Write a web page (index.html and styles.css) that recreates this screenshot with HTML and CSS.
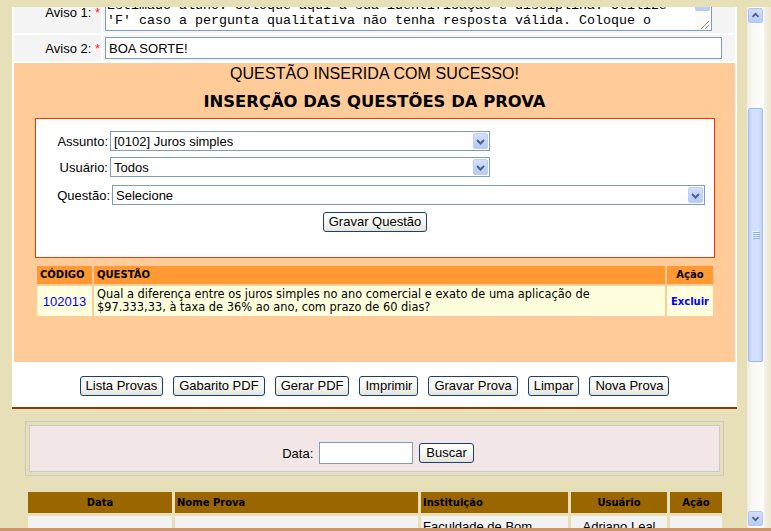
FILE: index.html
```html
<!DOCTYPE html>
<html lang="pt">
<head>
<meta charset="utf-8">
<title>Inserção das questões da prova</title>
<link rel="stylesheet" href="styles.css">
</head>
<body>
<div class="window">
  <div class="topstrip"></div>
  <div class="frame">
    <div class="viewport">
      <div class="page">
        <div class="panel">
          <div class="fields">
            <div class="flabel">Aviso 1:&nbsp;<span class="req">*</span></div>
            <div class="fcell">
              <div class="textarea">
                <div class="ta-text"><div>Estimado aluno: coloque aqui a sua identificação e disciplina. Utilize</div><div>'F' caso a pergunta qualitativa não tenha resposta válida. Coloque o</div></div>
                <div class="ta-bar">
                  <div class="ta-btn"><svg width="15" height="15" viewBox="0 0 15 15"><path d="M4 6l3.5 3.5L11 6" fill="none" stroke="#4d6185" stroke-width="2"/></svg></div>
                  <div class="ta-grip"><svg width="16" height="18" viewBox="0 0 16 18"><path d="M14 9L6 17M14 13L10 17" stroke="#8a8a8a" stroke-width="1"/></svg></div>
                </div>
              </div>
            </div>
            <div class="flabel">Aviso 2:&nbsp;<span class="req">*</span></div>
            <div class="fcell"><input class="text wide" type="text" value="BOA SORTE!"></div>
          </div>

          <div class="orange">
            <div class="msg">QUESTÃO INSERIDA COM SUCESSO!</div>
            <h2 class="title">INSERÇÃO DAS QUESTÕES DA PROVA</h2>
            <div class="qbox">
              <div class="qrow">
                <span class="qlabel">Assunto:</span>
                <div class="select s-short"><span class="sel-text">[0102] Juros simples</span><span class="sel-arrow"><svg width="13" height="13" viewBox="0 0 13 13"><path d="M3 5l3.5 3.5L10 5" fill="none" stroke="#4d6185" stroke-width="2"/></svg></span></div>
              </div>
              <div class="qrow r-gap6">
                <span class="qlabel">Usuário:</span>
                <div class="select s-short"><span class="sel-text">Todos</span><span class="sel-arrow"><svg width="13" height="13" viewBox="0 0 13 13"><path d="M3 5l3.5 3.5L10 5" fill="none" stroke="#4d6185" stroke-width="2"/></svg></span></div>
              </div>
              <div class="qrow r-gap8">
                <span class="qlabel ql-wide">Questão:</span>
                <div class="select s-long"><span class="sel-text">Selecione</span><span class="sel-arrow"><svg width="13" height="13" viewBox="0 0 13 13"><path d="M3 5l3.5 3.5L10 5" fill="none" stroke="#4d6185" stroke-width="2"/></svg></span></div>
              </div>
              <div class="qbtn"><button class="xpbtn" type="button">Gravar Questão</button></div>
            </div>

            <table class="qtable">
              <colgroup><col class="qc1"><col class="qc2"><col class="qc3"></colgroup>
              <tr><th>CÓDIGO</th><th>QUESTÃO</th><th class="center">Ação</th></tr>
              <tr>
                <td class="code">102013</td>
                <td class="qtext">Qual a diferença entre os juros simples no ano comercial e exato de uma aplicação de<br>$97.333,33, à taxa de 36% ao ano, com prazo de 60 dias?</td>
                <td class="act">Excluir</td>
              </tr>
            </table>
          </div>

          <div class="actions">
            <button class="xpbtn" type="button">Lista Provas</button>
            <button class="xpbtn" type="button">Gabarito PDF</button>
            <button class="xpbtn" type="button">Gerar PDF</button>
            <button class="xpbtn" type="button">Imprimir</button>
            <button class="xpbtn" type="button">Gravar Prova</button>
            <button class="xpbtn" type="button">Limpar</button>
            <button class="xpbtn" type="button">Nova Prova</button>
          </div>
        </div>

        <div class="lower">
          <div class="search">
            <div class="search-in">
              <span>Data:</span>
              <input class="text date" type="text">
              <button class="xpbtn buscar" type="button">Buscar</button>
            </div>
          </div>
          <table class="list">
            <colgroup><col class="lc1"><col class="lc2"><col class="lc3"><col class="lc4"><col class="lc5"></colgroup>
            <tr><th class="center">Data</th><th>Nome Prova</th><th>Instituição</th><th class="center">Usuário</th><th class="center">Ação</th></tr>
            <tr><td class="center mid">17/05/2010</td><td class="mid">Prova de Matemática Financeira</td><td>Faculdade de Bom Jesus da Lapa - FBJL</td><td class="center">Adriano Leal</td><td class="center mid"></td></tr>
          </table>
        </div>
      </div>
    </div>

    <div class="vscroll">
      <div class="sb-btn"><svg width="15" height="15" viewBox="0 0 15 15"><path d="M4 9l3.5-3.5L11 9" fill="none" stroke="#4d6185" stroke-width="2"/></svg></div>
      <div class="sb-thumb"><svg width="8" height="8" viewBox="0 0 8 8"><path d="M0 0.5h7M0 2.5h7M0 4.5h7M0 6.5h7" stroke="#eef4ff" stroke-width="1"/><path d="M1 1.5h7M1 3.5h7M1 5.5h7M1 7.5h7" stroke="#8fb0f0" stroke-width="1"/></svg></div>
      <div class="sb-fill"></div>
      <div class="sb-btn sb-down"><svg width="15" height="15" viewBox="0 0 15 15"><path d="M4 6l3.5 3.5L11 6" fill="none" stroke="#4d6185" stroke-width="2"/></svg></div>
    </div>
    <div class="edge"></div>
  </div>
  <div class="bottomline"></div>
</div>
</body>
</html>
```
FILE: styles.css
```css
* { box-sizing: border-box; }
html, body { margin: 0; padding: 0; }
body {
  width: 771px;
  height: 531px;
  overflow: hidden;
  background: #e7dfb8;
  font-family: "Liberation Sans", Arial, sans-serif;
  font-size: 13px;
  color: #000;
}
.window { display: flex; flex-direction: column; height: 531px; }
.topstrip { height: 7px; flex: none; background: #e7dfb8; }
.frame { display: flex; height: 521px; flex: none; }
.viewport { width: 747px; flex: none; overflow: hidden; background: #e7dfb8; }
.page { margin-top: -16px; padding: 0 10px 0 12px; }

.panel {
  background: #fff;
  padding: 0 2px;
  border-bottom: 2px solid #993300;
}

/* Aviso rows */
.fields {
  display: grid;
  grid-template-columns: 87px 1fr;
  grid-template-rows: 42px 26px;
  gap: 2px;
  margin-bottom: 2px;
}
.flabel {
  background: #f4f4f4;
  display: flex;
  align-items: center;
  justify-content: flex-end;
  padding-right: 1px;
  line-height: 15px;
}
.req { color: #ff2222; }
.fcell {
  background: #f4f4f4;
  padding: 2px 13px 2px 2px;
}
.textarea {
  width: 607px;
  height: 38px;
  border: 1px solid #7f9db9;
  background: #fff;
  display: flex;
  font-family: "Liberation Mono", "Courier New", monospace;
  font-size: 13.3333px;
  line-height: 15px;
}
.ta-text {
  flex: 1;
  padding: 4px 1px 2px;
  white-space: pre;
  overflow: hidden;
}
.ta-bar {
  width: 16px;
  display: flex;
  flex-direction: column;
  justify-content: flex-end;
  background: #fbfbf8;
}
.ta-btn {
  width: 15px;
  height: 15px;
  margin-bottom: 1px;
  background: linear-gradient(#d0ddfd, #b9cbf9);
  border: 1px solid #b3c6f4;
  border-radius: 2px;
  display: flex;
  align-items: center;
  justify-content: center;
}
.ta-btn svg { display: block; }
.ta-grip { height: 18px; }
.ta-grip svg { display: block; }

.text {
  height: 22px;
  border: 1px solid #7f9db9;
  padding: 0 3px;
  font-family: "Liberation Sans", Arial, sans-serif;
  font-size: 13px;
  color: #000;
  background: #fff;
  outline: none;
}
.wide { width: 617px; display: block; }

/* Orange block */
.orange {
  background: #ffcc99;
  padding: 2px 0 44px;
}
.msg {
  text-align: center;
  font-size: 16px;
  line-height: 18px;
  letter-spacing: 0.1px;
}
.title {
  margin: 9px 0 0;
  text-align: center;
  font-family: "DejaVu Sans", Verdana, sans-serif;
  font-weight: bold;
  font-size: 16.4px;
  line-height: 20px;
}
.qbox {
  margin: 6px 20px 0 21px;
  border: 1px solid #ff3300;
  background: #fff;
  padding: 12px 0 25px;
}
.qrow { display: flex; align-items: center; height: 20px; }
.r-gap6 { margin-top: 6px; }
.r-gap8 { margin-top: 8px; }
.qlabel { width: 72px; margin-right: 2px; text-align: right; }
.ql-wide { width: 74px; }
.select {
  height: 20px;
  border: 1px solid #7f9db9;
  background: #fff;
  display: flex;
  align-items: center;
}
.s-short { width: 380px; }
.s-long { width: 593px; }
.sel-text { flex: 1; padding-left: 3px; white-space: nowrap; }
.sel-arrow {
  width: 15px;
  height: 16px;
  margin-right: 1px;
  background: linear-gradient(#d3e0fe, #b6c9f9);
  border: 1px solid #bccdf6;
  border-radius: 2px;
  display: flex;
  align-items: center;
  justify-content: center;
}
.sel-arrow svg { display: block; }
.qbtn { margin-top: 7px; display: flex; justify-content: center; }

.xpbtn {
  height: 20px;
  padding: 0 5px;
  border: 1px solid #1c3f72;
  border-radius: 3px;
  background: linear-gradient(#ffffff, #f6f6f2 55%, #e4e3db);
  font-family: "Liberation Sans", Arial, sans-serif;
  font-size: 13px;
  line-height: 18px;
  color: #000;
  white-space: nowrap;
}

.qtable {
  margin: 6px 20px 0 21px;
  width: 680px;
  table-layout: fixed;
  border-collapse: separate;
  border-spacing: 2px;
}
.qc1 { width: 55px; }
.qc2 { width: 571px; }
.qc3 { width: 46px; }
.qtable th {
  background: #ff9933;
  height: 18px;
  padding: 0 3px;
  text-align: left;
  font-family: "DejaVu Sans", Verdana, sans-serif;
  font-weight: bold;
  font-size: 10px;
  line-height: 12px;
}
.qtable td {
  background: #ffffdd;
  height: 30px;
  padding: 0 3px;
}
.center { text-align: center !important; }
.code { text-align: center; color: #0000ff; }
.qtext {
  font-family: "DejaVu Sans", Verdana, sans-serif;
  font-size: 11.4px;
  line-height: 13px;
  white-space: nowrap;
}
.act {
  text-align: center;
  color: #0000ff;
  font-family: "DejaVu Sans", Verdana, sans-serif;
  font-weight: bold;
  font-size: 10px;
}

.actions {
  display: flex;
  justify-content: center;
  gap: 10px;
  padding: 14px 0 11px;
}

/* Lower area */
.lower { margin: 12px 0 0 13px; width: 700px; }
.search {
  margin-right: 1px;
  border: 1px solid #c9c9c9;
  padding: 3px;
}
.search-in {
  border: 1px solid #c9c9c9;
  background: #f2e6e6;
  padding: 16px 0 7px 7px;
  display: flex;
  justify-content: center;
  align-items: center;
  gap: 6px;
}
.date { width: 94px; }
.buscar { padding: 0 6px; }

.list {
  margin-top: 13px;
  width: 700px;
  table-layout: fixed;
  border-collapse: separate;
  border-spacing: 3px;
}
.lc1 { width: 144px; }
.lc2 { width: 243px; }
.lc3 { width: 147px; }
.lc4 { width: 96px; }
.lc5 { width: 52px; }
.list th {
  background: #996600;
  height: 21px;
  padding: 0 2px;
  text-align: left;
  font-family: "DejaVu Sans", Verdana, sans-serif;
  font-weight: bold;
  font-size: 10px;
  line-height: 12px;
}
.list td {
  background: #f2f2f2;
  vertical-align: top;
  padding: 3px 2px 2px;
  height: 50px;
  line-height: 15px;
}
.list td.mid { vertical-align: middle; }

/* Window scrollbar */
.vscroll {
  width: 17px;
  flex: none;
  display: flex;
  flex-direction: column;
  background: linear-gradient(to right, #eeece2, #f8f7f2 30%, #fdfdfb 100%);
}
.sb-btn {
  width: 15px;
  height: 15px;
  margin: 1px 1px 0;
  background: linear-gradient(#d2dffe, #b8cbf9);
  border: 1px solid #b2c6f5;
  border-radius: 2px;
  display: flex;
  align-items: center;
  justify-content: center;
  flex: none;
}
.sb-btn svg { display: block; }
.sb-down { margin: 0 1px 2px; }
.sb-thumb {
  width: 15px;
  height: 254px;
  margin: 85px 1px 0;
  flex: none;
  background: linear-gradient(to right, #bcd0fa, #d3e0fd 25%, #d3e0fd 75%, #bed1fa);
  border: 1px solid #a3bbf2;
  border-radius: 2px;
  display: flex;
  align-items: center;
  justify-content: center;
}
.sb-thumb svg { display: block; }
.sb-fill { flex: 1; }
.edge {
  width: 7px;
  flex: none;
  background: linear-gradient(to right, #f4f1e6, #ebe6d3);
}
.bottomline { height: 3px; flex: none; background: #cf9468; }
```
